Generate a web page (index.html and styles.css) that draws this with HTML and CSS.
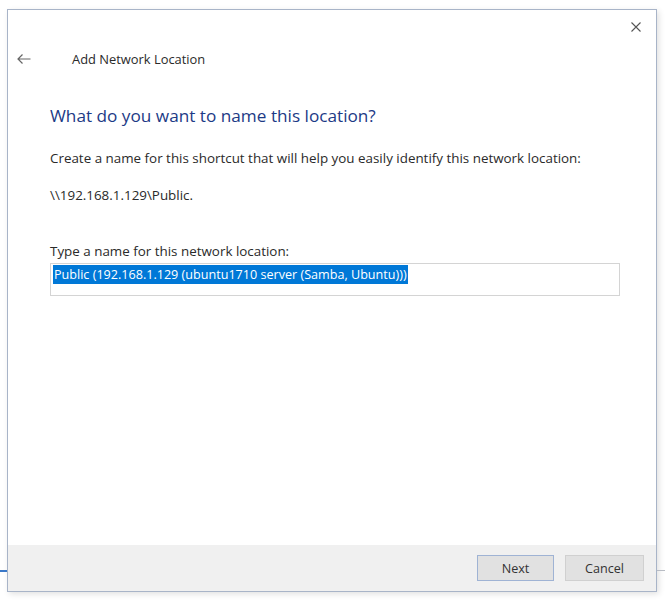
FILE: index.html
```html
<!DOCTYPE html>
<html>
<head>
<meta charset="utf-8">
<link rel="stylesheet" href="styles.css">
</head>
<body>
<div class="screen">
  <div class="edge-left"></div>
  <div class="edge-right"></div>
  <div class="window">
    <div class="titlebar">
      <span class="close">
        <svg width="10" height="10" viewBox="0 0 10 10"><path d="M0.5 0.5 L9.5 9.5 M9.5 0.5 L0.5 9.5" stroke="#555" stroke-width="1.1" fill="none"/></svg>
      </span>
    </div>
    <div class="header">
      <span class="back">
        <svg width="14" height="10" viewBox="0 0 14 10"><path d="M13.5 5 H1 M5.5 0.5 L1 5 L5.5 9.5" stroke="#666" stroke-width="1.2" fill="none"/></svg>
      </span>
      <span class="wtitle">Add Network Location</span>
    </div>
    <div class="content">
      <h1 class="heading">What do you want to name this location?</h1>
      <p class="text p1">Create a name for this shortcut that will help you easily identify this network location:</p>
      <p class="text p2">\\192.168.1.129\Public.</p>
      <p class="text p3">Type a name for this network location:</p>
      <div class="input"><span class="sel">Public (192.168.1.129 (ubuntu1710 server (Samba, Ubuntu)))</span></div>
    </div>
    <div class="footer">
      <button class="btn default">Next</button>
      <button class="btn">Cancel</button>
    </div>
  </div>
</div>
</body>
</html>
```
FILE: styles.css
```css
html, body {
  margin: 0;
  padding: 0;
  background: #ffffff;
}
.screen {
  position: relative;
  width: 665px;
  height: 600px;
  padding: 9px 0 0 7px;
  box-sizing: border-box;
  font-family: "Open Sans", "Noto Sans", sans-serif;
}
.edge-left {
  position: absolute;
  left: 0;
  top: 570px;
  width: 7px;
  height: 2px;
  background: #3a78c8;
}
.edge-right {
  position: absolute;
  left: 657px;
  top: 570px;
  width: 8px;
  height: 1px;
  background: #b8bcc4;
}
.window {
  width: 650px;
  height: 583px;
  box-sizing: border-box;
  border: 1px solid #a8b4c8;
  background: #ffffff;
  display: flex;
  flex-direction: column;
  box-shadow: 2px 2px 6px rgba(0,0,0,0.12);
}
.titlebar {
  height: 30px;
  display: flex;
  justify-content: flex-end;
  align-items: flex-start;
}
.close {
  margin: 12px 15px 0 0;
  width: 10px;
  height: 10px;
  display: block;
}
.close svg, .back svg { display: block; }
.header {
  display: flex;
  align-items: center;
  height: 38px;
  padding-left: 9px;
}
.back {
  width: 14px;
  height: 10px;
  margin-right: 41px;
}
.wtitle {
  font-size: 12.9px;
  color: #2a2a2a;
}
.content {
  flex: 1;
  padding: 0 0 0 42px;
}
.heading {
  margin: 27px 0 0 0;
  font-weight: normal;
  font-size: 17.2px;
  color: #1c3a86;
  line-height: 22px;
}
.text {
  margin: 0;
  font-size: 13.4px;
  line-height: 16px;
  color: #2a2a2a;
}
.p1 { margin-top: 23px; }
.p2 { margin-top: 21px; }
.p3 { margin-top: 40px; }
.input {
  margin-top: 4px;
  width: 570px;
  height: 33px;
  box-sizing: border-box;
  border: 1px solid #d4d4d4;
  padding: 1px 0 0 2px;
}
.sel {
  display: inline-block;
  background: #0078d7;
  color: #ffffff;
  font-size: 12.6px;
  line-height: 19px;
  padding: 0 1px;
  vertical-align: top;
}
.footer {
  height: 46px;
  background: #f0f0f0;
  display: flex;
  justify-content: flex-end;
  align-items: center;
  gap: 11px;
  padding-right: 12px;
}
.btn {
  width: 77px;
  height: 26px;
  box-sizing: border-box;
  background: #e1e1e1;
  border: 1px solid #d0d0d0;
  font-family: "Open Sans", "Noto Sans", sans-serif;
  font-size: 12.6px;
  color: #333;
  padding: 0;
  margin: 0;
}
.btn + .btn { width: 79px; }
.btn.default {
  border: 1px solid #9fb3d4;
}
```
